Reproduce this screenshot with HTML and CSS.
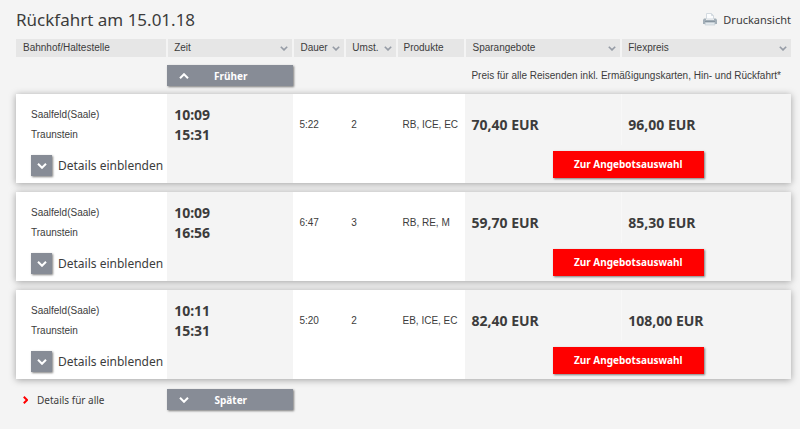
FILE: index.html
```html
<!DOCTYPE html>
<html lang="de">
<head>
    <meta charset="UTF-8">
    <meta name="viewport" content="width=device-width, initial-scale=1.0">
    <title>Rückfahrt am 15.01.18</title>
    <link rel="stylesheet" href="styles.css">
</head>
<body>
    <svg class="sprite" width="0" height="0" aria-hidden="true">
        <symbol id="down" viewBox="0 0 10 6"><path d="M1 0.8 5 4.8 9 0.8"/></symbol>
        <symbol id="up" viewBox="0 0 10 6"><path d="M1 5.2 5 1.2 9 5.2"/></symbol>
    </svg>

    <header class="page-header">
        <h1>Rückfahrt am 15.01.18</h1>
        <a href="#" class="print">
            <svg class="printer" viewBox="0 0 14 13" aria-hidden="true">
                <path d="M3.500 6V.5h5L10.500 2.500V6z" fill="#fbfcfd" stroke="#d3dae0"/>
                <path d="M8.500.5v2h2" fill="none" stroke="#d3dae0"/>
                <path d="M1 5.500h2V7h8V5.500h2l1 1.500v4H0V7z" fill="#a3afb8"/>
                <path d="M2 8.500h10" stroke="#8795a0"/>
                <path d="M2.500 9.500h9l.5 2.500H2z" fill="#e3e9ed" stroke="#c3cdd4" stroke-width=".6"/>
            </svg>
            Druckansicht
        </a>
    </header>

    <table class="timetable">
        <colgroup>
            <col class="col-station">
            <col class="col-time">
            <col class="col-duration">
            <col class="col-changes">
            <col class="col-products">
            <col class="col-saver">
            <col class="col-flex">
        </colgroup>
        <thead>
            <tr>
                <th>Bahnhof/Haltestelle</th>
                <th><button type="button" class="sort">Zeit <svg><use href="#down"/></svg></button></th>
                <th><button type="button" class="sort">Dauer <svg><use href="#down"/></svg></button></th>
                <th><button type="button" class="sort">Umst. <svg><use href="#down"/></svg></button></th>
                <th>Produkte</th>
                <th><button type="button" class="sort">Sparangebote <svg><use href="#down"/></svg></button></th>
                <th><button type="button" class="sort">Flexpreis <svg><use href="#down"/></svg></button></th>
            </tr>
        </thead>
        <tbody class="nav">
            <tr>
                <td></td>
                <td><button type="button" class="btn btn-nav"><svg><use href="#up"/></svg><span>Früher</span></button></td>
                <td colspan="5" class="note">Preis für alle Reisenden inkl. Ermäßigungskarten, Hin- und Rückfahrt*</td>
            </tr>
        </tbody>

        <tbody class="connection">
            <tr class="main">
                <td class="station">Saalfeld(Saale)<br>Traunstein</td>
                <td class="time" rowspan="2">10:09<br>15:31</td>
                <td>5:22</td>
                <td>2</td>
                <td>RB, ICE, EC</td>
                <td class="price">70,40 EUR</td>
                <td class="price">96,00 EUR</td>
            </tr>
            <tr class="actions">
                <td class="station">
                    <div class="details">
                        <button type="button" class="btn btn-toggle" id="details-1" aria-labelledby="label-1"><svg><use href="#down"/></svg></button>
                        <label for="details-1" id="label-1">Details einblenden</label>
                    </div>
                </td>
                <td colspan="3"></td>
                <td colspan="2" class="offer"><button type="button" class="btn btn-red">Zur Angebotsauswahl</button></td>
            </tr>
        </tbody>
        <tbody class="spacer"><tr><td colspan="7"></td></tr></tbody>

        <tbody class="connection">
            <tr class="main">
                <td class="station">Saalfeld(Saale)<br>Traunstein</td>
                <td class="time" rowspan="2">10:09<br>16:56</td>
                <td>6:47</td>
                <td>3</td>
                <td>RB, RE, M</td>
                <td class="price">59,70 EUR</td>
                <td class="price">85,30 EUR</td>
            </tr>
            <tr class="actions">
                <td class="station">
                    <div class="details">
                        <button type="button" class="btn btn-toggle" id="details-2" aria-labelledby="label-2"><svg><use href="#down"/></svg></button>
                        <label for="details-2" id="label-2">Details einblenden</label>
                    </div>
                </td>
                <td colspan="3"></td>
                <td colspan="2" class="offer"><button type="button" class="btn btn-red">Zur Angebotsauswahl</button></td>
            </tr>
        </tbody>
        <tbody class="spacer"><tr><td colspan="7"></td></tr></tbody>

        <tbody class="connection">
            <tr class="main">
                <td class="station">Saalfeld(Saale)<br>Traunstein</td>
                <td class="time" rowspan="2">10:11<br>15:31</td>
                <td>5:20</td>
                <td>2</td>
                <td>EB, ICE, EC</td>
                <td class="price">82,40 EUR</td>
                <td class="price">108,00 EUR</td>
            </tr>
            <tr class="actions">
                <td class="station">
                    <div class="details">
                        <button type="button" class="btn btn-toggle" id="details-3" aria-labelledby="label-3"><svg><use href="#down"/></svg></button>
                        <label for="details-3" id="label-3">Details einblenden</label>
                    </div>
                </td>
                <td colspan="3"></td>
                <td colspan="2" class="offer"><button type="button" class="btn btn-red">Zur Angebotsauswahl</button></td>
            </tr>
        </tbody>

        <tbody class="nav nav-bottom">
            <tr>
                <td>
                    <a href="#" class="all-details">
                        <svg viewBox="0 0 5 8" aria-hidden="true"><path d="M.8.8 4 4 .8 7.200"/></svg>
                        Details für alle
                    </a>
                </td>
                <td><button type="button" class="btn btn-nav"><svg><use href="#down"/></svg><span>Später</span></button></td>
                <td colspan="5"></td>
            </tr>
        </tbody>
    </table>
</body>
</html>
```

FILE: styles.css
```css
* {
    box-sizing: border-box;
}
body {
    margin: 0;
    padding: 0 9px 0 16px;
    background-color: #f4f4f4;
    color: #3c3c3c;
    font-family: "Liberation Sans", Arial, sans-serif;
    font-size: 10px;
    line-height: 20px;
}
button {
    font: inherit;
    color: inherit;
    border: none;
    cursor: pointer;
}
svg {
    fill: none;
    stroke: currentColor;
    stroke-width: 2;
    flex: none;
}
.sprite {
    position: absolute;
}
.page-header {
    display: flex;
    justify-content: space-between;
    align-items: center;
    height: 39px;
    font-family: "Noto Sans", sans-serif;
}
h1 {
    margin: 0;
    font-size: 17px;
    font-weight: 400;
}
.print {
    display: flex;
    align-items: center;
    gap: 6px;
    color: inherit;
    font-size: 11px;
    text-decoration: none;
}
.printer {
    width: 14px;
    height: 13px;
    stroke: none;
    stroke-width: 1;
}
.timetable {
    width: 100%;
    table-layout: fixed;
    border-collapse: separate;
    border-spacing: 0;
}
.col-station {
    width: 19.5%;
}
.col-time {
    width: 16.3%;
}
.col-duration {
    width: 6.7%;
}
.col-changes {
    width: 6.6%;
}
.col-products {
    width: 8.9%;
}
.col-saver {
    width: 20.1%;
}
th {
    height: 18px;
    padding: 0 4px 0 6px;
    background-color: #e6e6e6;
    border: 0 solid #f4f4f4;
    border-width: 0 1px;
    font-weight: 400;
    line-height: 18px;
    text-align: left;
}
th:first-child {
    border-left: none;
    padding-left: 7px;
}
th:last-child {
    border-right: none;
}
td {
    padding: 0;
}
.sort {
    display: flex;
    justify-content: space-between;
    align-items: center;
    width: 100%;
    padding: 0;
    background: none;
}
.sort svg {
    width: 8px;
    height: 5px;
    color: #969ca6;
}
.nav td {
    height: 37px;
}
.nav-bottom td {
    height: 41px;
}
.nav .note {
    padding-right: 10px;
    text-align: right;
}
.btn {
    background-color: #878c96;
    color: #fff;
    font-family: "Noto Sans", sans-serif;
    font-weight: 700;
    box-shadow: 1px 1px 2px rgba(0, 0, 0, 0.5);
}
.btn svg {
    width: 10px;
    height: 6px;
}
.btn-nav {
    display: flex;
    align-items: center;
    width: 100%;
    height: 21px;
    padding: 0 21px 0 12px;
    font-size: 10px;
}
.btn-nav span {
    flex: 1;
}
.btn-toggle {
    display: flex;
    justify-content: center;
    align-items: center;
    width: 21px;
    height: 21px;
    padding: 0;
}
.btn-red {
    width: 151px;
    height: 27px;
    padding: 0;
    background-color: #f00;
    font-size: 10px;
}
.connection {
    background-color: #f4f4f4;
    box-shadow: 0 1px 7px rgba(0, 0, 0, 0.35);
}
.connection td {
    padding-left: 6px;
    background-color: #fff;
}
.main td {
    height: 51px;
    padding-top: 11px;
}
.actions td {
    height: 38px;
}
.connection .station {
    padding-left: 15px;
}
.connection .time,
.connection .price {
    background-color: #f4f4f4;
    font-family: "Noto Sans", sans-serif;
    font-size: 14px;
    font-weight: 700;
}
.connection .time {
    padding-left: 7px;
    vertical-align: top;
}
.connection .price:last-child {
    border-left: 1px solid #f8f8f8;
}
.connection .offer {
    padding: 0;
    background-color: #f4f4f4;
    text-align: center;
    vertical-align: middle;
}
.details {
    display: flex;
    align-items: center;
    gap: 6px;
    padding-top: 3px;
    font-family: "Noto Sans", sans-serif;
    font-size: 12px;
    white-space: nowrap;
}
.spacer td {
    height: 9px;
}
.all-details {
    display: flex;
    align-items: center;
    gap: 9px;
    padding-left: 7px;
    color: inherit;
    font-family: "Noto Sans", sans-serif;
    text-decoration: none;
}
.all-details svg {
    width: 5px;
    height: 8px;
    color: #f00;
}
```
